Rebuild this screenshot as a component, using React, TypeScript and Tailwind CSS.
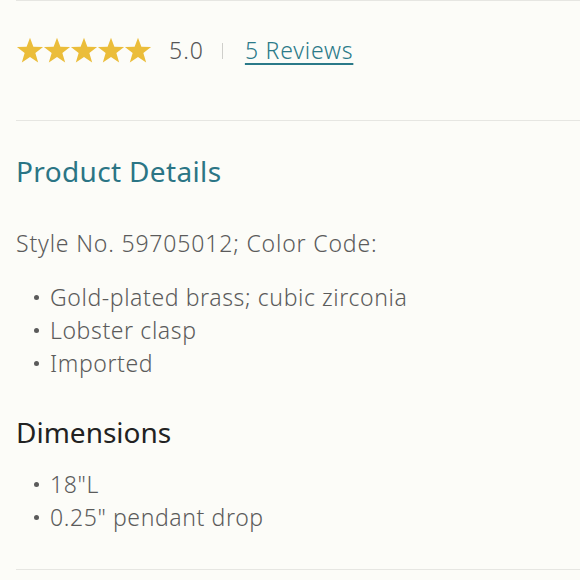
import React from "react";

const details = ["Gold-plated brass; cubic zirconia", "Lobster clasp", "Imported"];
const dims = ['18"L', '0.25" pendant drop'];

function Star() {
  return (
    <svg width="28" height="27" viewBox="0 0 24 23" className="block -mr-px">
      <polygon
        points="12,0.5 14.9,8.3 23.2,8.6 16.6,13.7 19,21.8 12,17.1 5,21.8 7.4,13.7 0.8,8.6 9.1,8.3"
        fill="#ebbd3a"
      />
    </svg>
  );
}

function Bullets({ items }: { items: string[] }) {
  return (
    <ul className="pl-[18px]">
      {items.map((t) => (
        <li key={t} className="flex items-center h-[33px] text-[23px] font-light text-[#5b5b5b] tracking-[0.6px]">
          <span className="w-[5px] h-[5px] rounded-full bg-[#5b5b5b] mr-[11px]" />
          {t}
        </li>
      ))}
    </ul>
  );
}

export default function App() {
  return (
    <div className="w-[580px] h-[580px] bg-[#fcfcf8] pl-4 overflow-hidden" style={{ fontFamily: "'Noto Sans', sans-serif" }}>
      <div className="border-t border-[#e6e6e2] h-[120px] flex items-center pb-[20px]">
        <div className="flex items-center">
          {[0, 1, 2, 3, 4].map((i) => (
            <Star key={i} />
          ))}
        </div>
        <span className="ml-[18px] text-[23px] font-light text-[#555] tracking-[1px]">5.0</span>
        <span className="ml-[18px] w-px h-[16px] bg-[#cfcfcb]" />
        <a href="#" className="ml-[22px] text-[23px] font-light text-[#2b7a89] underline underline-offset-[4px] tracking-[0.8px]">
          5 Reviews
        </a>
      </div>
      <div className="border-t border-[#e6e6e2] pt-[34px]">
        <h2 className="text-[28px] leading-[32px] text-[#2b7585] tracking-[0.35px]">Product Details</h2>
        <p className="mt-[41px] text-[23px] leading-[30px] font-light text-[#5b5b5b] tracking-[0.83px]">Style No. 59705012; Color Code:</p>
        <div className="mt-[23px]">
          <Bullets items={details} />
        </div>
        <h3 className="mt-[36px] text-[28px] leading-[32px] text-[#222] tracking-[0px]">Dimensions</h3>
        <div className="mt-[20px]">
          <Bullets items={dims} />
        </div>
        <div className="mt-[35px] border-t border-[#e6e6e2]" />
      </div>
    </div>
  );
}
